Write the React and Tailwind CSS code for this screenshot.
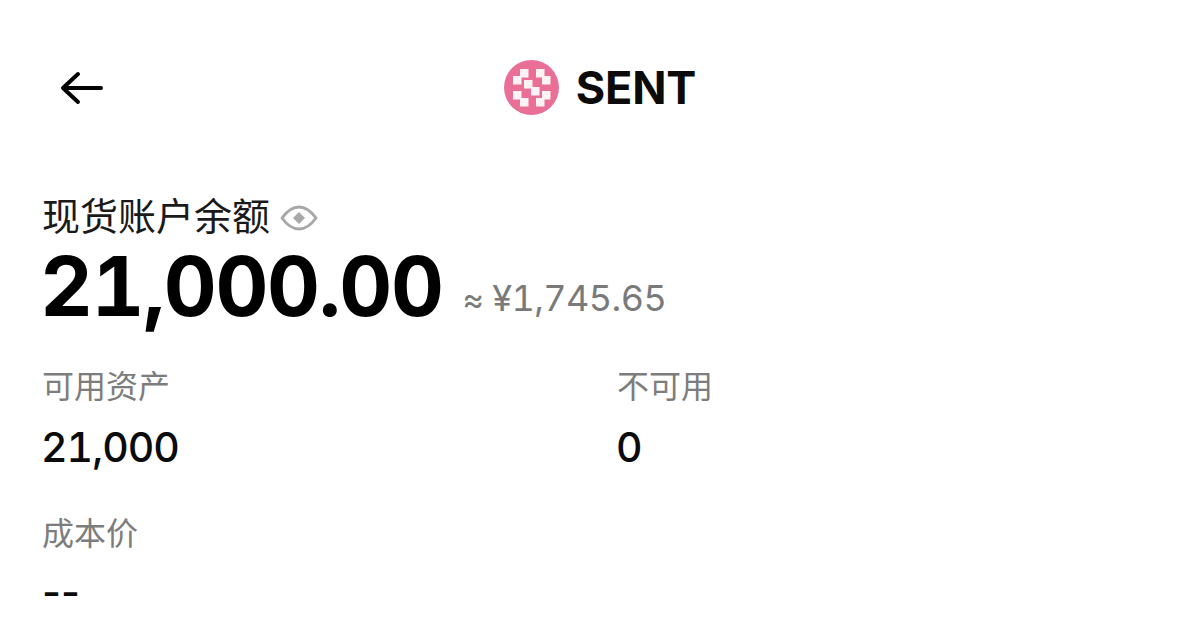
import React from 'react';

const cjkFont = { fontFamily: 'Inter, "Noto Sans CJK SC", sans-serif' };

function SentLogo() {
    // white checker squares on the pink disc
    const squares = [
        [16, 9], [32, 9],
        [9, 16], [38, 16],
        [20, 20], [27, 27],
        [9, 31], [38, 31],
        [16, 38], [32, 38],
    ];
    return (
        <svg width="55" height="55" viewBox="0 0 55 55">
            <circle cx="27.5" cy="27.5" r="27.5" fill="#ea6f97" />
            {squares.map(([x, y]) => (
                <rect key={`${x}-${y}`} x={x} y={y} width="8.5" height="8.5" fill="#fdf3f6" />
            ))}
        </svg>
    );
}

function Stat({ label, value, className }) {
    return (
        <div className={className}>
            <div className="text-[32px] leading-[38px] text-[#7d7d7d]" style={cjkFont}>{label}</div>
            <div className="mt-[22px] -ml-[1px] text-[41px] leading-[38px] font-medium tabular-nums tracking-[-1px] text-[#0b0b0b]">{value}</div>
        </div>
    );
}

export default function App() {
    return (
        <div className="w-[1200px] h-[638px] overflow-hidden bg-white font-['Inter','Noto_Sans_CJK_SC',sans-serif]">
            {/* Header */}
            <div className="relative flex h-[115px] items-end justify-center">
                <button className="absolute left-[60px] top-[71px] text-black">
                    <svg width="44" height="34" viewBox="0 0 44 34" fill="none" stroke="currentColor" strokeWidth="4" strokeLinecap="round" strokeLinejoin="round">
                        <path d="M41 17H4" />
                        <path d="M18 3 3 17l15 14" />
                    </svg>
                </button>
                <div className="flex items-center gap-[17px]">
                    <SentLogo />
                    <span className="text-[45px] leading-[54px] font-bold tracking-[-0.2px] text-[#0b0b0b]">SENT</span>
                </div>
            </div>

            <div className="pl-[42px] pt-[78px]">
                {/* Balance */}
                <div className="flex h-[46px] items-center gap-[10px]">
                    <span className="text-[38px] leading-[46px] text-[#1a1a1a]" style={cjkFont}>现货账户余额</span>
                    <svg className="mt-[3px]" width="38" height="26" viewBox="0 0 38 26" fill="none" stroke="#a8a8a8" strokeWidth="3" strokeLinejoin="round">
                        <path d="M2 13C7 6 12 2 19 2s12 4 17 11c-5 7-10 11-17 11S7 20 2 13Z" />
                        <path d="m19 7 6 6-6 6-6-6Z" fill="#a8a8a8" stroke="none" />
                    </svg>
                </div>
                <div className="mt-[10px] flex items-end gap-[20px]">
                    <span className="-ml-[2px] text-[82px] leading-[76px] font-bold tabular-nums tracking-[-1.4px] text-black">21,000.00</span>
                    <span className="pb-[6px] text-[36px] leading-[40px] tabular-nums tracking-[-0.6px] text-[#7a7a7a]"><span className="mr-[9px] text-[33px]">≈</span>¥1,745.65</span>
                </div>

                {/* Stats */}
                <div className="mt-[43px] flex">
                    <Stat label="可用资产" value="21,000" className="w-[575px]" />
                    <Stat label="不可用" value="0" />
                </div>
                <div className="mt-[49px]">
                    <div className="text-[32px] leading-[38px] text-[#7d7d7d]" style={cjkFont}>成本价</div>
                    <div className="mt-[20px] text-[41px] leading-[38px] font-medium text-[#0b0b0b]">--</div>
                </div>
            </div>
        </div>
    );
}
